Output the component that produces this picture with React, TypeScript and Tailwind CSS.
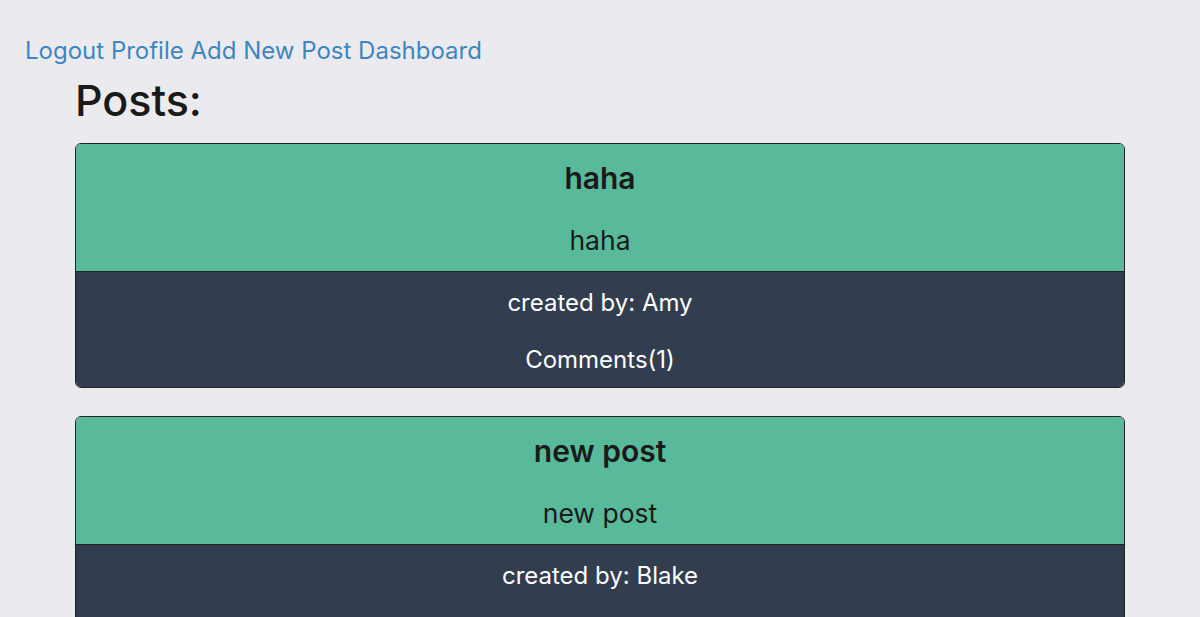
const posts = [
  { title: 'haha', body: 'haha', author: 'Amy', comments: 1 },
  { title: 'new post', body: 'new post', author: 'Blake', comments: 0 },
];

function PostCard({ post }: { post: (typeof posts)[number] }) {
  return (
    <div className="rounded-md border border-[#222] overflow-hidden text-center">
      <div className="bg-[#59b99b] pt-4 pb-[15px] text-[#1a1a1a]">
        <h3 className="text-[30px] leading-9 font-semibold">{post.title}</h3>
        <p className="mt-7 text-[26.5px] leading-8">{post.body}</p>
      </div>
      <div className="bg-[#323e4f] border-t border-[#222] pt-[15px] pb-[11px] text-white">
        <p className="text-2xl leading-8">created by: {post.author}</p>
        <p className="mt-[25px] text-2xl leading-8">Comments({post.comments})</p>
      </div>
    </div>
  );
}

export default function App() {
  return (
    <div className="min-h-screen bg-[#ebebef] font-['Inter','Noto_Sans',sans-serif]">
      <nav className="pt-[35px] pl-[25px] text-2xl leading-8 text-[#3e86c0]">
        <a href="#">Logout</a> <a href="#">Profile</a> <a href="#">Add New Post</a>{' '}
        <a href="#">Dashboard</a>
      </nav>
      <main className="px-[75px]">
        <h1 className="mt-[7px] text-[43px] leading-[52px] font-medium text-[#1a1a1a]">Posts:</h1>
        <div className="mt-[17px] flex flex-col gap-7">
          {posts.map((p) => (
            <PostCard key={p.title} post={p} />
          ))}
        </div>
      </main>
    </div>
  );
}
